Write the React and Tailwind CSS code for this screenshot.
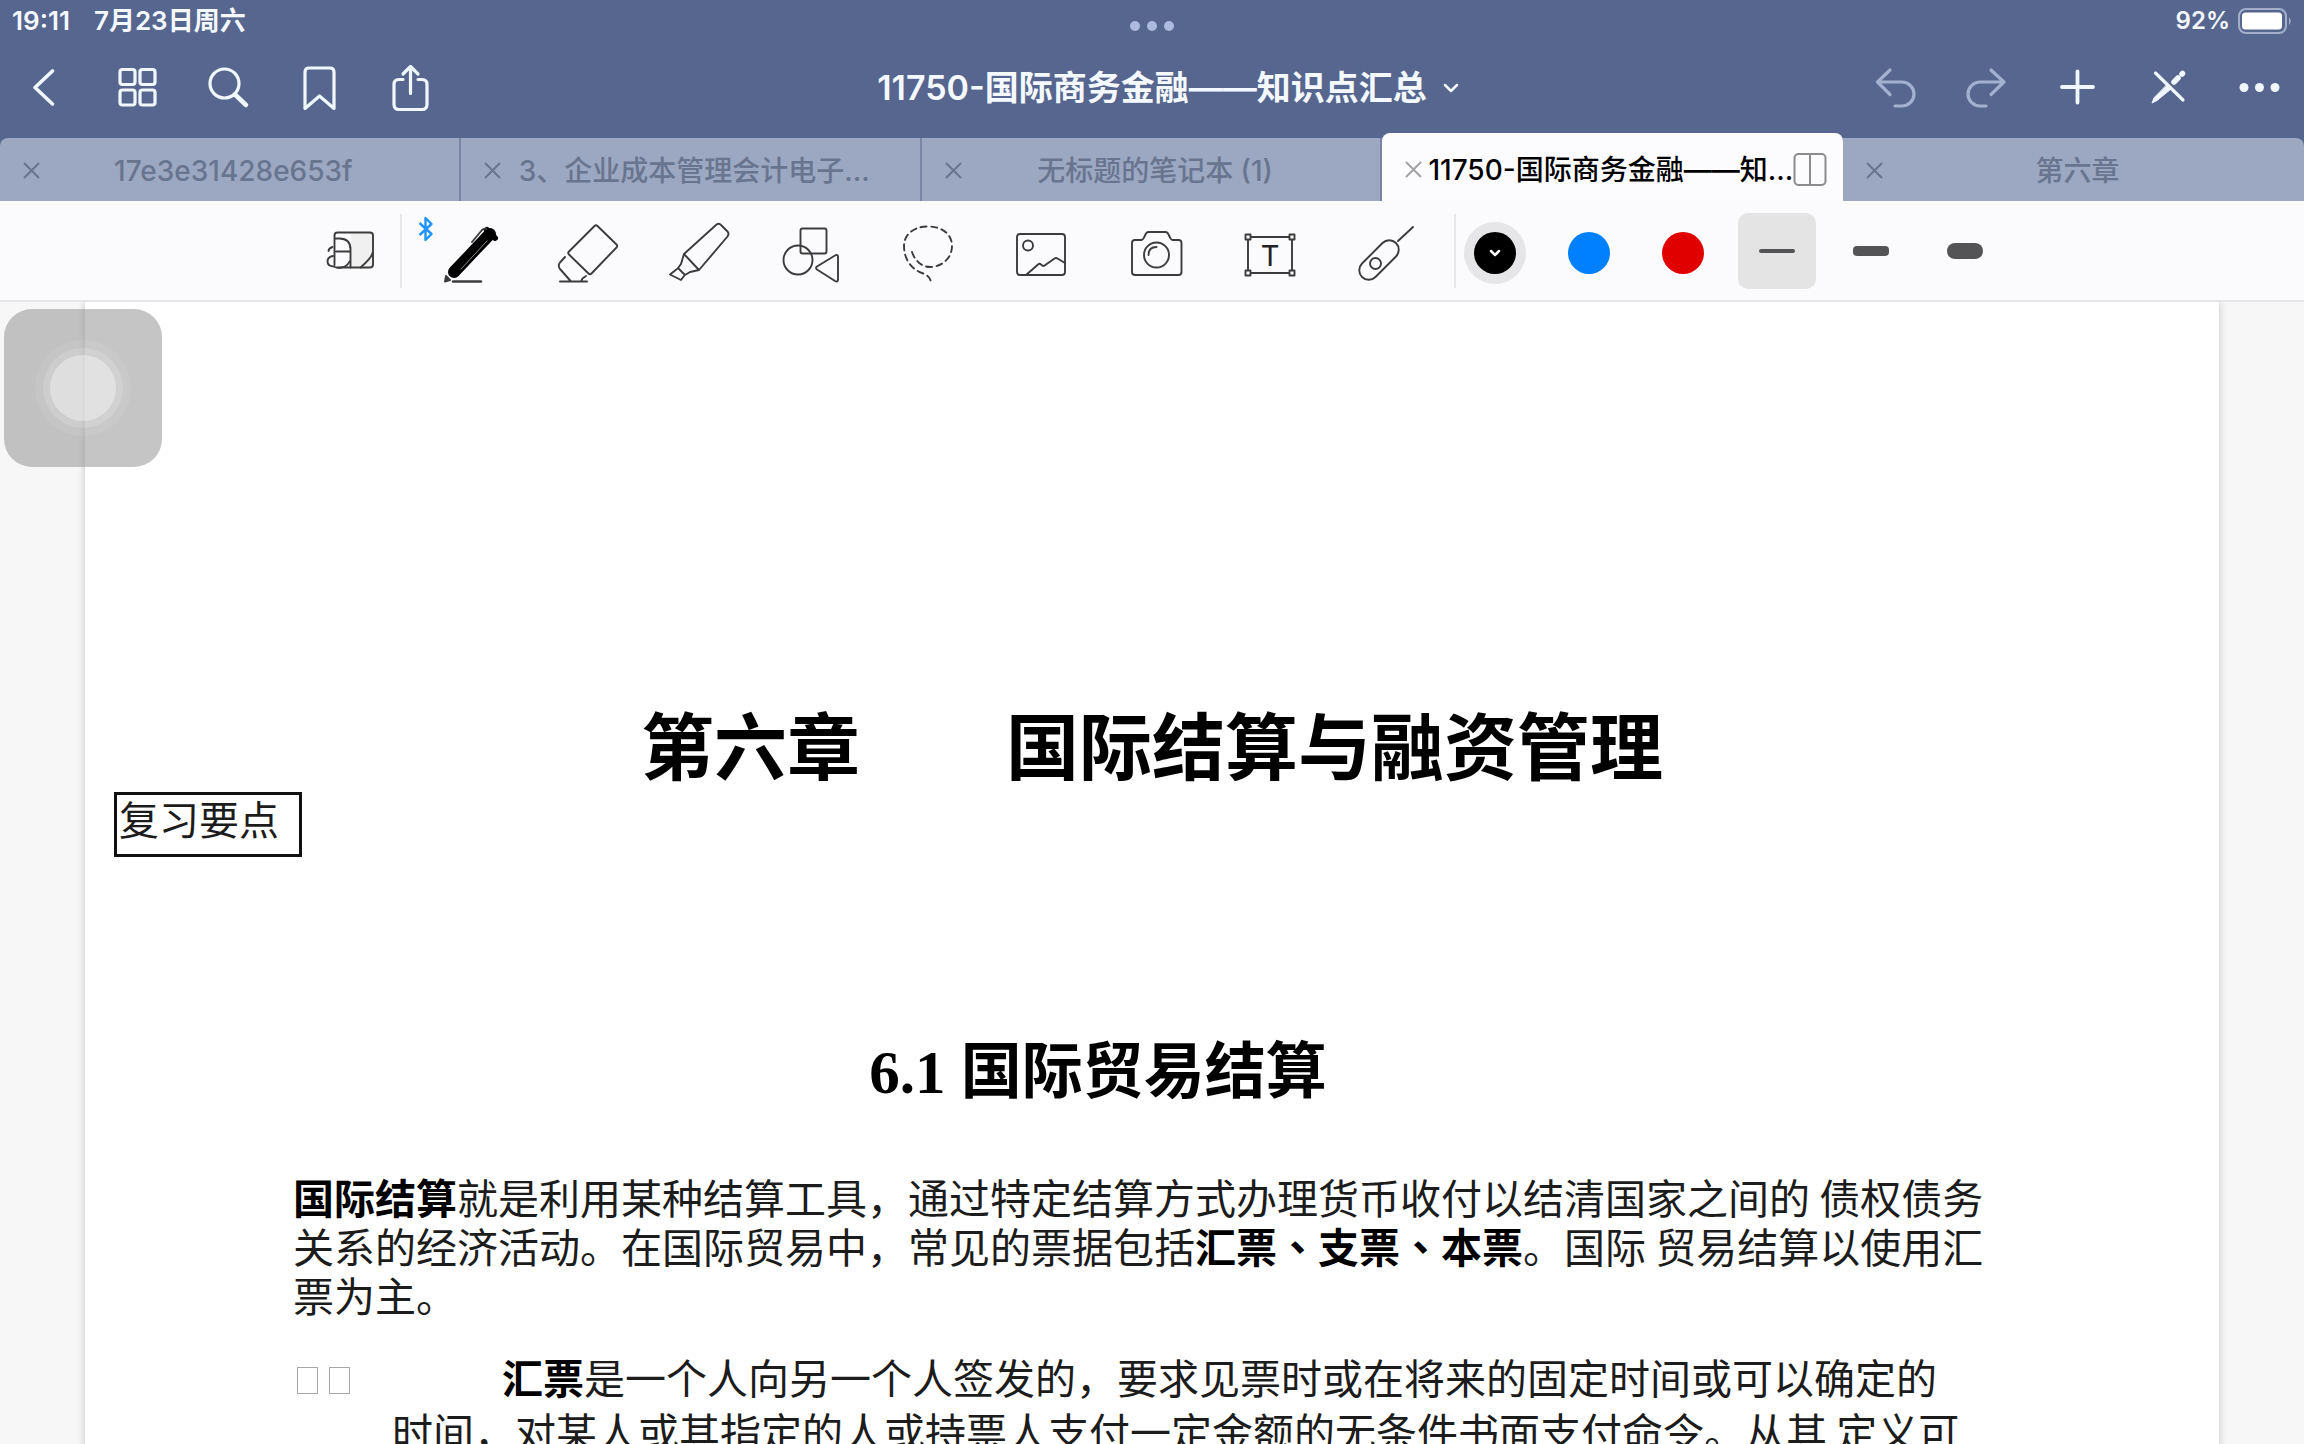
import { useState } from 'react';

const TABS = [
  { id: 't1', title: '17e3e31428e653f' },
  { id: 't2', title: '3、企业成本管理会计电子...' },
  { id: 't3', title: '无标题的笔记本 (1)' },
  { id: 't4', title: '11750-国际商务金融——知...', split: true },
  { id: 't5', title: '第六章' },
];

const COLORS = [
  { id: 'black', label: '黑色', dot: 'bg-black' },
  { id: 'blue',  label: '蓝色', dot: 'bg-[#0080ff]' },
  { id: 'red',   label: '红色', dot: 'bg-[#e00000]' },
];

const WIDTHS = [
  { id: 'thin',   label: '细', bar: 'h-1 rounded-xs' },
  { id: 'medium', label: '中', bar: 'h-2.5 rounded-sm' },
  { id: 'thick',  label: '粗', bar: 'h-4 rounded-lg' },
];

function NavIcon({ children }) {
  return (
    <svg viewBox="0 0 48 48" className="w-12 h-12 overflow-visible" fill="none" stroke="currentColor"
      strokeWidth="3.200" strokeLinecap="round" strokeLinejoin="round">
      {children}
    </svg>
  );
}

const NAV_LEFT = [
  { label: '返回', icon: <path d="M32.500 7L15 23.500 32.500 40" strokeWidth="3.600" /> },
  {
    label: '缩略图',
    icon: (
      <>
        <rect x="9" y="5.500" width="15" height="15" rx="2.500" />
        <rect x="29" y="5.500" width="15" height="15" rx="2.500" />
        <rect x="9" y="26" width="15" height="15" rx="2.500" />
        <rect x="29" y="26" width="15" height="15" rx="2.500" />
      </>
    ),
  },
  {
    label: '搜索',
    icon: (
      <>
        <circle cx="22.500" cy="19.500" r="14.500" />
        <path d="M33 30.500l11 10.500" strokeWidth="4.500" />
      </>
    ),
  },
  { label: '书签', icon: <path d="M12 44.500V8q0-4 4-4h21q4 0 4 4v36.500L26.500 32Z" /> },
  {
    label: '分享',
    icon: <path d="M19 15.500h-4q-5 0-5 5v20q0 5 5 5h23q5 0 5-5v-20q0-5-5-5h-4M26.500 29.500v-27M19 10L26.500 2.500 34 10" />,
  },
];

const NAV_RIGHT = [
  { label: '撤销', dim: true, icon: <path d="M18 6L5.500 18 18 30.500M5.500 18H30a12 12 0 0 1 0 24h-7" /> },
  { label: '重做', dim: true, icon: <path d="M28 6l13 12-13 12.500M41 18H17a12 12 0 0 0 0 24h6" /> },
  { label: '添加', icon: <path d="M23.500 7.500v31M8 23h31" strokeWidth="3.800" /> },
  {
    label: '只读模式',
    icon: (
      <>
        <path d="M10.500 9L38 36" />
        <path d="M37 10l.5-.5M33 14l-4 4" strokeWidth="5.500" />
        <path d="M22 21l4 4-14 11.500-5 2.500 2-5Z" fill="currentColor" strokeWidth="1" />
      </>
    ),
  },
  {
    label: '更多',
    icon: (
      <g fill="currentColor" stroke="none">
        <circle cx="8" cy="23.500" r="4.500" />
        <circle cx="23.500" cy="23.500" r="4.500" />
        <circle cx="39" cy="23.500" r="4.500" />
      </g>
    ),
  },
];

function ToolIcon({ children }) {
  return (
    <svg viewBox="0 0 64 64" className="w-16 h-16 overflow-visible" fill="none" stroke="#3c3c3c"
      strokeWidth="1.900" strokeLinecap="round" strokeLinejoin="round">
      {children}
    </svg>
  );
}

const TOOLS = [
  {
    id: 'pen', label: '钢笔',
    icon: (
      <>
        <path d="M15 53L51 15" stroke="#000" strokeWidth="12" />
        <path d="M48 11l8 8" stroke="#000" strokeWidth="6" />
        <path d="M33 23l10-12q2-2 4-1" />
        <path d="M22 50L48 22" stroke="#8a8a8a" strokeWidth="1" />
        <path d="M7 57l4 4-5 1.500Z" fill="#3c3c3c" />
        <path d="M14 62.500h28" strokeWidth="2.400" />
      </>
    ),
  },
  {
    id: 'eraser', label: '橡皮擦',
    icon: <path d="M41.500 7q1.500-1.500 3 0l19 18.500q1.500 1.500 0 3L38.500 54.500q-1.500 1.500-3 0L16 35.500q-1.500-1.500 0-3ZM12 38l-5 5.500q-2.500 3 0 6.500l11 12.500M33 57q-4 2-5 5.500M7 62.500h27" />,
  },
  {
    id: 'highlighter', label: '荧光笔',
    icon: <path d="M17 35L49 6q3-2.500 5 0l6.500 6.500q2 2 0 5L32 51ZM17 35l-3 10-3 4 7 7 5-3 9-2M10 50l-7 5.500L14 61l3-4" />,
  },
  {
    id: 'shapes', label: '形状',
    icon: (
      <>
        <rect x="19.500" y="9.500" width="26" height="25" rx="2" />
        <circle cx="17" cy="41" r="14.500" />
        <path d="M36 47.500l18-11q3-1.500 3 1.500v22.500q0 3-3 1.500L36 50.500q-2-1.500 0-3Z" />
      </>
    ),
  },
  {
    id: 'lasso', label: '套索',
    icon: (
      <path strokeDasharray="6 4.500"
        d="M17 33C20 42 27 48 35 48C48 48 57 38 57 27C57 15 47 7.500 33 7.500C18 7.500 9 16 9 27C9 40 16 50 27 54C32 56 35 58 36 63" />
    ),
  },
  {
    id: 'image', label: '图片',
    icon: (
      <>
        <rect x="8" y="15" width="48" height="41" rx="3" />
        <circle cx="19" cy="26.500" r="5" />
        <path d="M17 56l12-10.500q1.500-1.500 3 0l2 1.500q1.500 0 3-1.500l8.500-6q1.500-1 3 0L56 44" />
      </>
    ),
  },
  {
    id: 'camera', label: '相机',
    icon: (
      <>
        <path d="M12 21h6q2 0 3-2.500l1.500-3q1-2.500 3-2.500h17q2 0 3 2.500l1.500 3q1 2.500 3 2.500h5.500q3 0 3 3v29q0 3-3 3H12q-3 0-3-3V24q0-3 3-3Z" />
        <circle cx="33.500" cy="36" r="12.500" />
        <path d="M25.500 36q0-8 8-8" />
      </>
    ),
  },
  {
    id: 'text', label: '文本',
    icon: (
      <>
        <path d="M13 18h40M13 54h40M11 20v32M55 20v32" />
        <path d="M8.500 15.500h5v5h-5ZM52.500 15.500h5v5h-5ZM8.500 51.500h5v5h-5ZM52.500 51.500h5v5h-5Z" fill="#fbfbfd" />
        <text x="33" y="47" textAnchor="middle" fontFamily="Inter, sans-serif" fontSize="29" fill="#222" stroke="none">T</text>
      </>
    ),
  },
  {
    id: 'laser', label: '激光笔',
    icon: (
      <>
        <rect x="4" y="31.500" width="48" height="19" rx="9.500" transform="rotate(-45 28 41)" />
        <circle cx="24.500" cy="44.500" r="5.500" />
        <path d="M47 22L62 8" />
      </>
    ),
  },
];

function StatusBar() {
  return (
    <div className="grid grid-cols-3 items-center h-[42px] px-3 text-2xl font-semibold">
      <div className="flex gap-6 text-[26px]">
        <span>19:11</span>
        <span>7月23日周六</span>
      </div>
      <div className="flex justify-center gap-[7px] pt-2.5">
        <i className="w-2.5 h-2.5 rounded-full bg-[#adb9de]" />
        <i className="w-2.5 h-2.5 rounded-full bg-[#adb9de]" />
        <i className="w-2.5 h-2.5 rounded-full bg-[#adb9de]" />
      </div>
      <div className="flex items-center justify-end gap-1.5">
        <span>92%</span>
        <svg viewBox="0 0 56 26" className="w-14 h-[26px]" aria-label="电池">
          <rect x="3" y="1" width="47" height="24" rx="7" fill="none" stroke="#a3aecb" strokeWidth="2" />
          <rect x="6" y="4.500" width="40" height="17" rx="3.500" fill="#fff" />
          <path d="M53 9q3.500 4 0 8Z" fill="#a3aecb" />
        </svg>
      </div>
    </div>
  );
}

function NavButtons({ items }) {
  return items.map(item => (
    <button key={item.label} aria-label={item.label} className={item.dim ? 'text-[#a4b0d0]' : 'text-[#f0f7ff]'}>
      <NavIcon>{item.icon}</NavIcon>
    </button>
  ));
}

function NavBar() {
  return (
    <div className="grid grid-cols-[1fr_auto_1fr] items-center h-[91px] px-5">
      <div className="flex gap-[43px]"><NavButtons items={NAV_LEFT} /></div>
      <button className="flex items-center gap-4 pl-8 text-[34px] font-semibold">
        <span>11750-国际商务金融——知识点汇总</span>
        <svg viewBox="0 0 16 16" className="w-4 h-4" fill="none" stroke="currentColor" strokeWidth="2.500" strokeLinecap="round" strokeLinejoin="round">
          <path d="M2 5l6 6 6-6" />
        </svg>
      </button>
      <div className="flex justify-end gap-[43px]"><NavButtons items={NAV_RIGHT} /></div>
    </div>
  );
}

function Tab({ tab, active, onSelect }) {
  return (
    <div className={`flex min-w-0 items-center pl-5 ${active
      ? 'h-[68px] pt-1.5 pr-4 rounded-t-lg bg-[#fcfcff] text-black'
      : 'h-[63px] pt-0.5 pr-9 border-r-2 border-[#7986a8] last:border-r-0 last:rounded-tr-lg first:rounded-tl-lg bg-[#9ca8c1] text-[#69748f]'}`}>
      <button aria-label="关闭标签" className={active ? 'text-[#a3a3a3]' : ''}>
        <svg viewBox="0 0 24 24" className="w-6 h-6" fill="none" stroke="currentColor" strokeWidth="2">
          <path d="M4 4l15 15M19 4L4 19" />
        </svg>
      </button>
      <button onClick={onSelect} className={`flex-1 min-w-0 text-[28px] font-medium whitespace-nowrap ${tab.split ? 'text-right' : ''}`}>
        {tab.title}
      </button>
      {tab.split && (
        <button aria-label="分屏" className="text-[#8c8c8c]">
          <svg viewBox="0 0 34 34" className="w-[34px] h-[34px]" fill="none" stroke="currentColor" strokeWidth="2">
            <rect x="1.500" y="1" width="31" height="31" rx="4" />
            <path d="M17 1v31" />
          </svg>
        </button>
      )}
    </div>
  );
}

function Toolbar() {
  const [tool, setTool]   = useState('pen');
  const [color, setColor] = useState('black');
  const [width, setWidth] = useState('thin');

  return (
    <div className="flex items-center justify-center h-[101px] bg-[#fbfbfd] border-b-2 border-[#e6e6e9]">
      <button aria-label="阅读模式" className="flex justify-center w-[100px]">
        <ToolIcon>
          <path d="M33 13.500h19q3 0 3 3v29q0 3-3 3H33Z" fill="#f0f0f1" stroke="none" />
          <path d="M16.500 46V16.500q0-3 3-3H52q3 0 3 3v29q0 3-3 3H19" />
          <path d="M17.500 19.500h4q11 0 11 11v18M18 32.500h14" />
          <path d="M10.500 32q.5-3 4-4M15 37q-5.500 1-5.500 5.500t6 5q4 2 8 1 6-1 8-6" />
          <path d="M54.500 34q-1 5-12 14.500" />
        </ToolIcon>
      </button>
      <div className="w-0.5 h-[74px] mr-3 bg-[#e7e7ea]" />

      <div className="flex">
        {TOOLS.map(t => (
          <button key={t.id} aria-label={t.label} aria-pressed={tool === t.id} onClick={() => setTool(t.id)}
            className="relative flex justify-center items-center w-[114px] h-[98px]">
            {t.id === 'pen' && (
              <svg viewBox="0 0 16 26" className="absolute left-1 top-3.5 w-4 h-[26px]" fill="none" stroke="#1f93ff" strokeWidth="2.400" strokeLinejoin="round">
                <path d="M1.500 7l12 11-6 6V2l6 6-12 11" />
              </svg>
            )}
            <ToolIcon>{t.icon}</ToolIcon>
          </button>
        ))}
      </div>

      <div className="w-0.5 h-[74px] ml-3.5 bg-[#e7e7ea]" />
      <div className="flex items-center gap-4">
        {COLORS.map(c => (
          <button key={c.id} aria-label={c.label} aria-pressed={color === c.id} onClick={() => setColor(c.id)}
            className="flex justify-center items-center w-[78px] pt-1">
            <span className={`flex justify-center items-center w-[62px] h-[62px] rounded-full ${color === c.id ? 'bg-[#e6e5e7]' : ''}`}>
              <span className={`flex justify-center items-center w-[42px] h-[42px] rounded-full ${c.dot}`}>
                {color === c.id && (
                  <svg viewBox="0 0 12 8" className="w-3 h-2" fill="none" stroke="#fff" strokeWidth="2.500" strokeLinecap="round" strokeLinejoin="round">
                    <path d="M2 2l4 4 4-4" />
                  </svg>
                )}
              </span>
            </span>
          </button>
        ))}
        {WIDTHS.map(w => (
          <button key={w.id} aria-label={w.label} aria-pressed={width === w.id} onClick={() => setWidth(w.id)}
            className={`flex justify-center items-center w-[78px] h-[76px] rounded-[10px] ${width === w.id ? 'bg-[#e4e4e5]' : ''}`}>
            <span className={`w-9 bg-[#545456] ${w.bar}`} />
          </button>
        ))}
      </div>
    </div>
  );
}

function AssistiveTouch() {
  return (
    <button aria-label="辅助触控" className="absolute left-1 top-[7px] flex justify-center items-center w-[158px] h-[158px] rounded-[28px] bg-[#8c8c8c]/50">
      <span className="flex justify-center items-center w-24 h-24 rounded-full bg-white/8">
        <span className="flex justify-center items-center w-20 h-20 rounded-full bg-white/15">
          <span className="w-[66px] h-[66px] rounded-full bg-white/35" />
        </span>
      </span>
    </button>
  );
}

function DocumentPage() {
  return (
    <article className="mx-[85px] min-h-full pt-[395px] bg-white shadow-[0_0_8px_rgba(0,0,20,0.2)] font-['Noto_Sans_CJK_SC',sans-serif] text-[41px] text-[#1c1c1c]">
      <h1 className="text-center text-[73px] leading-[90px] font-bold text-black">第六章　　国际结算与融资管理</h1>
      <p className="w-[188px] h-[65px] mt-[5px] ml-[29px] pl-0.5 border-[3px] border-[#111] text-[40px] leading-[46px]">复习要点</p>

      <h2 className="mt-[174px] pr-[108px] text-center text-[61px] leading-[72px] font-bold text-black">
        <span className="font-['Liberation_Serif',serif]">6.1 </span>国际贸易结算
      </h2>

      <p className="mt-[63px] px-[208px] leading-[49px]">
        <strong className="text-black">国际结算</strong>就是利用某种结算工具，通过特定结算方式办理货币收付以结清国家之间的 债权债务关系的经济活动。在国际贸易中，常见的票据包括<strong lang="zh-TW" className="font-['Noto_Sans_CJK_TC',sans-serif] text-black">汇票、支票、本票</strong>。国际 贸易结算以使用汇票为主。
      </p>

      <div className="flex mt-[30px] pl-[208px] pr-[248px] leading-[54px]">
        <div className="flex gap-[11px] w-[99px] pl-1 pt-[18px] shrink-0">
          <i className="w-[21px] h-[27px] border border-[#a8a8a8]" />
          <i className="w-[21px] h-[27px] border border-[#a8a8a8]" />
        </div>
        <p className="flex-1 indent-[110px]">
          <strong className="text-black">汇票</strong>是一个人向另一个人签发的，要求见票时或在将来的固定时间或可以确定的时间，对某人或其指定的人或持票人支付一定金额的无条件书面支付命令。从其 定义可
        </p>
      </div>
    </article>
  );
}

export default function App() {
  const [activeTab, setActiveTab] = useState('t4');

  return (
    <div lang="zh-CN" className="flex flex-col h-screen bg-[#f7f7f7] font-['Inter','Noto_Sans_CJK_SC',sans-serif]">
      <header className="bg-[#56668e] text-[#f4f9ff]">
        <StatusBar />
        <NavBar />
        <nav className="grid grid-cols-5 items-end">
          {TABS.map(tab => (
            <Tab key={tab.id} tab={tab} active={tab.id === activeTab} onSelect={() => setActiveTab(tab.id)} />
          ))}
        </nav>
      </header>
      <Toolbar />
      <div className="relative flex-1 min-h-0">
        <main className="h-full overflow-y-auto [scrollbar-width:none]">
          <DocumentPage />
        </main>
        <AssistiveTouch />
      </div>
    </div>
  );
}
